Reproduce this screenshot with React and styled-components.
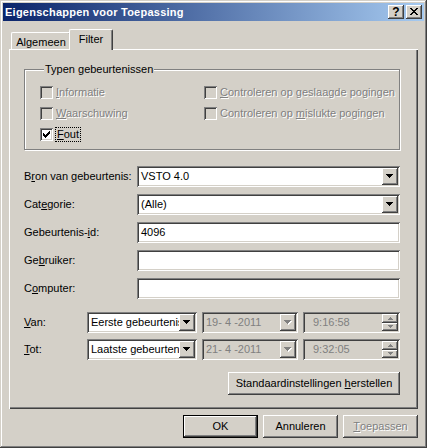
import React from 'react';
import styled, { createGlobalStyle, css } from 'styled-components';

const GlobalStyle = createGlobalStyle`
  html, body { margin: 0; padding: 0; background: #d4d0c8; }
  body { font-family: "Liberation Sans", Arial, sans-serif; font-size: 11px; color: #000; }
  * { box-sizing: border-box; }
`;

const raised = css`
  box-shadow: inset -1px -1px #404040, inset 1px 1px #fff, inset -2px -2px #808080, inset 2px 2px #d4d0c8;
`;
const sunken = css`
  box-shadow: inset 1px 1px #808080, inset -1px -1px #fff, inset 2px 2px #404040, inset -2px -2px #d4d0c8;
`;
const disabledText = css`
  color: #808080;
  text-shadow: 1px 1px #fff;
`;

const Window = styled.div`
  width: 427px;
  height: 448px;
  padding: 3px;
  background: #d4d0c8;
  box-shadow: inset -1px -1px #404040, inset 1px 1px #d4d0c8, inset -2px -2px #808080, inset 2px 2px #fff;
  display: flex;
  flex-direction: column;
`;

const TitleBar = styled.div`
  height: 18px;
  flex: none;
  display: flex;
  align-items: center;
  padding: 0 2px 0 2px;
  background: linear-gradient(to right, #0a246a, #a6caf0);
`;

const Title = styled.div`
  flex: 1;
  color: #fff;
  font-weight: bold;
  font-size: 11px;
  letter-spacing: 0.25px;
  line-height: 14px;
  white-space: nowrap;
`;

const CaptionButtons = styled.div`
  display: flex;
  gap: 2px;
`;

const CaptionButton = styled.div`
  width: 16px;
  height: 14px;
  background: #d4d0c8;
  ${raised};
  display: flex;
  align-items: center;
  justify-content: center;
  font-weight: bold;
  font-size: 12px;
  line-height: 12px;
  padding-bottom: 1px;
`;

const TabArea = styled.div`
  margin: 8px 6px 0;
  display: flex;
  flex-direction: column;
`;

const TabStrip = styled.div`
  height: 20px;
  display: flex;
  align-items: flex-end;
  padding-left: 2px;
`;

const Tab = styled.div`
  position: relative;
  z-index: ${p => (p.$active ? 1 : 0)};
  width: ${p => p.$w}px;
  height: ${p => (p.$active ? 21 : 17)}px;
  margin: ${p => (p.$active ? '0 -2px -1px' : '0')};
  padding-top: 3px;
  background: #d4d0c8;
  border-top: 1px solid #fff;
  border-left: 1px solid #fff;
  border-right: 1px solid #404040;
  border-radius: 2px 2px 0 0;
  box-shadow: inset -1px 0 #808080;
  line-height: 13px;
  text-align: center;
  white-space: nowrap;
`;

const Panel = styled.div`
  height: 360px;
  padding: 14px 18px 0 15px;
  background: #d4d0c8;
  box-shadow: inset 1px 1px #fff, inset -1px -1px #404040, inset -2px -2px #808080;
  display: flex;
  flex-direction: column;
`;

const Group = styled.fieldset`
  margin: 0;
  padding: 10px 0 8px 15px;
  border: 1px solid #808080;
  box-shadow: inset 1px 1px #fff, 1px 1px #fff;
  min-width: 0;
`;

const Legend = styled.legend`
  padding: 0 1px;
  margin-left: 4px;
  background: #d4d0c8;
  line-height: 13px;
`;

const CheckGrid = styled.div`
  display: grid;
  grid-template-columns: 164px 1fr;
  row-gap: 8px;
`;

const CheckRow = styled.div`
  display: flex;
  align-items: center;
  gap: 3px;
  height: 13px;
  white-space: nowrap;
`;

const Box = styled.span`
  width: 13px;
  height: 13px;
  flex: none;
  background: ${p => (p.$disabled ? '#d4d0c8' : '#fff')};
  ${sunken};
  display: flex;
  align-items: center;
  justify-content: center;
`;

const Label = styled.span`
  line-height: 13px;
  ${p => p.$disabled && disabledText};
  ${p => p.$focus && css`outline: 1px dotted #000; outline-offset: 0; padding: 0 1px;`};
`;

const Form = styled.div`
  margin-top: 16px;
  display: grid;
  grid-template-columns: 113px 1fr;
  grid-auto-rows: 21px;
  row-gap: 7px;
  align-items: center;
`;

const FieldLabel = styled.div`
  line-height: 13px;
  white-space: nowrap;
`;

const Field = styled.div`
  height: 21px;
  width: ${p => (p.$w ? `${p.$w}px` : 'auto')};
  flex: none;
  padding: 2px;
  background: ${p => (p.$disabled ? '#d4d0c8' : '#fff')};
  ${sunken};
  display: flex;
  align-items: stretch;
`;

const FieldText = styled.div`
  flex: 1;
  min-width: 0;
  padding-left: ${p => p.$pl ?? 2}px;
  line-height: 17px;
  white-space: nowrap;
  overflow: hidden;
  ${p => p.$disabled && css`color: #808080;`};
`;

const DropBtn = styled.div`
  width: 16px;
  flex: none;
  background: #d4d0c8;
  ${raised};
  display: flex;
  align-items: center;
  justify-content: center;
`;

const Spinner = styled.div`
  width: 16px;
  flex: none;
  display: flex;
  flex-direction: column;
`;

const SpinBtn = styled.div`
  flex: 1;
  background: #d4d0c8;
  ${raised};
  display: flex;
  align-items: center;
  justify-content: center;
`;

const DateRows = styled.div`
  margin-top: 13px;
  display: flex;
  flex-direction: column;
  gap: 6px;
`;

const DateRow = styled.div`
  display: flex;
  align-items: center;
  gap: 5px;
`;

const DateLabel = styled.div`
  width: 58px;
  flex: none;
  line-height: 13px;
`;

const ResetRow = styled.div`
  margin-top: 12px;
  display: flex;
  justify-content: flex-end;
`;

const Button = styled.div`
  width: ${p => p.$w}px;
  height: 23px;
  background: #d4d0c8;
  display: flex;
  align-items: center;
  justify-content: center;
  line-height: 13px;
  white-space: nowrap;
  ${p =>
    p.$default
      ? css`
          box-shadow: inset 0 0 0 1px #000, inset -2px -2px #404040, inset 2px 2px #fff, inset -3px -3px #808080;
        `
      : raised};
  ${p => p.$disabled && disabledText};
`;

const ButtonRow = styled.div`
  margin: 6px 6px 0;
  display: flex;
  justify-content: flex-end;
  gap: 5px;
`;

const px = rects =>
  rects.map(([x, y, w, h], i) => <rect key={i} x={x} y={y} width={w} height={h} />);

const CheckMark = () => (
  <svg width="7" height="7" viewBox="0 0 7 7" shapeRendering="crispEdges" fill="#000">
    {px([[6, 0, 1, 1], [5, 1, 2, 1], [0, 2, 1, 1], [4, 2, 3, 1], [0, 3, 2, 1], [3, 3, 3, 1], [0, 4, 5, 1], [1, 5, 3, 1], [2, 6, 1, 1]])}
  </svg>
);

const CloseGlyph = () => (
  <svg width="8" height="7" viewBox="0 0 8 7" shapeRendering="crispEdges" fill="#000">
    {px([[0, 0, 2, 1], [6, 0, 2, 1], [1, 1, 2, 1], [5, 1, 2, 1], [2, 2, 4, 1], [3, 3, 2, 1], [2, 4, 4, 1], [1, 5, 2, 1], [5, 5, 2, 1], [0, 6, 2, 1], [6, 6, 2, 1]])}
  </svg>
);

const DownArrow = ({ disabled }) => (
  <svg width="8" height="5" viewBox="0 0 8 5" shapeRendering="crispEdges">
    {disabled && <g fill="#fff">{px([[1, 1, 7, 1], [2, 2, 5, 1], [3, 3, 3, 1], [4, 4, 1, 1]])}</g>}
    <g fill={disabled ? '#808080' : '#000'}>{px([[0, 0, 7, 1], [1, 1, 5, 1], [2, 2, 3, 1], [3, 3, 1, 1]])}</g>
  </svg>
);

const SmallArrow = ({ up }) => (
  <svg width="5" height="3" viewBox="0 0 5 3" shapeRendering="crispEdges" fill="#808080">
    {up ? px([[2, 0, 1, 1], [1, 1, 3, 1], [0, 2, 5, 1]]) : px([[0, 0, 5, 1], [1, 1, 3, 1], [2, 2, 1, 1]])}
  </svg>
);

const Check = ({ disabled, checked, focus, children }) => (
  <CheckRow>
    <Box $disabled={disabled}>{checked && <CheckMark />}</Box>
    <Label $disabled={disabled} $focus={focus}>{children}</Label>
  </CheckRow>
);

const Combo = ({ value, w, disabled }) => (
  <Field $w={w} $disabled={disabled}>
    <FieldText $disabled={disabled}>{value}</FieldText>
    <DropBtn>
      <DownArrow disabled={disabled} />
    </DropBtn>
  </Field>
);

const TextInput = ({ value }) => (
  <Field>
    <FieldText>{value}</FieldText>
  </Field>
);

const TimeField = ({ value, w }) => (
  <Field $w={w} $disabled>
    <FieldText $disabled $pl={8}>{value}</FieldText>
    <Spinner>
      <SpinBtn><SmallArrow up /></SpinBtn>
      <SpinBtn><SmallArrow /></SpinBtn>
    </Spinner>
  </Field>
);

export default function App() {
  return (
    <>
      <GlobalStyle />
      <Window>
        <TitleBar>
          <Title>Eigenschappen voor Toepassing</Title>
          <CaptionButtons>
            <CaptionButton>?</CaptionButton>
            <CaptionButton><CloseGlyph /></CaptionButton>
          </CaptionButtons>
        </TitleBar>
        <TabArea>
          <TabStrip>
            <Tab $w={60}>Algemeen</Tab>
            <Tab $w={44} $active>Filter</Tab>
          </TabStrip>
          <Panel>
            <Group>
              <Legend>Typen gebeurtenissen</Legend>
              <CheckGrid>
                <Check disabled><u>I</u>nformatie</Check>
                <Check disabled><u>C</u>ontroleren op geslaagde pogingen</Check>
                <Check disabled><u>W</u>aarschuwing</Check>
                <Check disabled>Controleren op <u>m</u>islukte pogingen</Check>
                <Check checked focus><u>F</u>out</Check>
              </CheckGrid>
            </Group>
            <Form>
              <FieldLabel>B<u>r</u>on van gebeurtenis:</FieldLabel>
              <Combo value="VSTO 4.0" />
              <FieldLabel>Cat<u>e</u>gorie:</FieldLabel>
              <Combo value="(Alle)" />
              <FieldLabel>Gebeurtenis-<u>i</u>d:</FieldLabel>
              <TextInput value="4096" />
              <FieldLabel>Ge<u>b</u>ruiker:</FieldLabel>
              <TextInput value="" />
              <FieldLabel>C<u>o</u>mputer:</FieldLabel>
              <TextInput value="" />
            </Form>
            <DateRows>
              <DateRow>
                <DateLabel><u>V</u>an:</DateLabel>
                <Combo value="Eerste gebeurtenis" w={110} />
                <Combo value="19- 4 -2011" w={96} disabled />
                <TimeField value="9:16:58" w={97} />
              </DateRow>
              <DateRow>
                <DateLabel><u>T</u>ot:</DateLabel>
                <Combo value="Laatste gebeurtenis" w={110} />
                <Combo value="21- 4 -2011" w={96} disabled />
                <TimeField value="9:32:05" w={97} />
              </DateRow>
            </DateRows>
            <ResetRow>
              <Button $w={172}>Standaardinstellingen&nbsp;<u>h</u>erstellen</Button>
            </ResetRow>
          </Panel>
        </TabArea>
        <ButtonRow>
          <Button $w={75} $default>OK</Button>
          <Button $w={75}>Annuleren</Button>
          <Button $w={75} $disabled><u>T</u>oepassen</Button>
        </ButtonRow>
      </Window>
    </>
  );
}
